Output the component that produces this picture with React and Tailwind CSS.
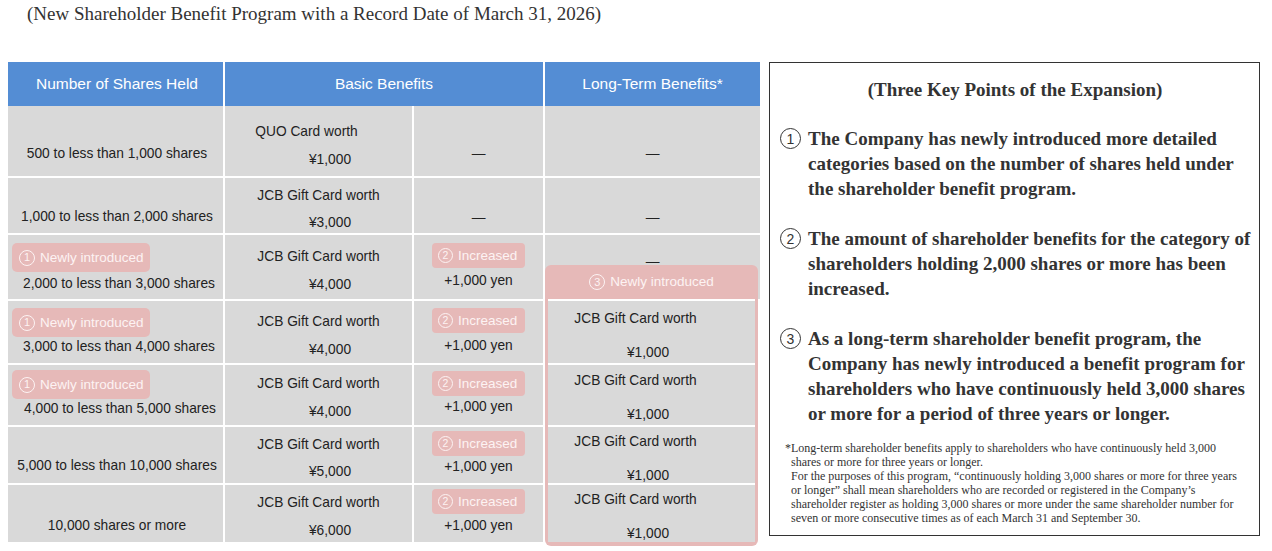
import React from "react";

const SANS = "font-['Liberation_Sans',Arial,sans-serif]";
const SERIF = "font-['Liberation_Serif','Times_New_Roman',serif]";

function Circ({ n, cls }) {
  return (
    <span className={"shrink-0 rounded-full flex items-center justify-center leading-none " + cls}>
      {n}
    </span>
  );
}

function BadgeNew({ cls }) {
  return (
    <div className={"ml-[4px] w-[138px] h-[29px] rounded-[5px] bg-[#e6b9b8] flex items-center gap-[5px] pl-[7px] text-[13.5px] text-[#fdf3f3] " + cls}>
      <Circ n="1" cls="w-[16px] h-[16px] border border-[#fdf3f3] text-[11px]" />
      <span>Newly introduced</span>
    </div>
  );
}

function BadgeInc({ cls }) {
  return (
    <div className={"mx-auto w-[93px] h-[25px] rounded-[4px] bg-[#e6b9b8] flex items-center gap-[5px] pl-[6px] text-[13.5px] text-[#fdf3f3] " + cls}>
      <Circ n="2" cls="w-[15px] h-[15px] border border-[#fdf3f3] text-[10.5px]" />
      <span>Increased</span>
    </div>
  );
}

const cell = "bg-[#d9d9d9] text-center leading-[20px]";

export default function App() {
  return (
    <div className={"w-[1272px] h-[551px] bg-white overflow-hidden text-[#222] " + SANS}>
      <div className={"pl-[27px] h-[28px] leading-[28px] text-[19px] text-[#333] " + SERIF}>
        (New Shareholder Benefit Program with a Record Date of March 31, 2026)
      </div>

      <div className="mt-[34px] flex items-start">
        {/* Table */}
        <div className="ml-[8px] w-[752px] text-[13.75px]">
          <div className="grid grid-cols-[215px_318px_215px] gap-x-[2px] h-[44px] text-white text-[15.5px]">
            <div className="bg-[#548dd4] flex items-center justify-center pl-[3px]">Number of Shares Held</div>
            <div className="bg-[#548dd4] flex items-center justify-center">Basic Benefits</div>
            <div className="bg-[#548dd4] flex items-center justify-center">Long-Term Benefits*</div>
          </div>

          <div className="grid grid-cols-[215px_187px_129px_215px] grid-rows-[70px_55px_64px_62px_60px_56px_57px] gap-[2px]">
            {/* Row 1 */}
            <div className={cell + " pt-[38px] pl-[3px]"}>500 to less than 1,000 shares</div>
            <div className={cell + " pt-[16px]"}>
              <div className="pr-[24px]">QUO Card worth</div>
              <div className="mt-[7.5px] pl-[23px]">¥1,000</div>
            </div>
            <div className={cell + " pt-[38px]"}>—</div>
            <div className={cell + " pt-[38px]"}>—</div>

            {/* Row 2 */}
            <div className={cell + " pt-[29px] pl-[3px]"}>1,000 to less than 2,000 shares</div>
            <div className={cell + " pt-[8px]"}>
              <div>JCB Gift Card worth</div>
              <div className="mt-[7px] pl-[23px]">¥3,000</div>
            </div>
            <div className={cell + " pt-[30px]"}>—</div>
            <div className={cell + " pt-[30px]"}>—</div>

            {/* Row 3 */}
            <div className={cell + " pt-[8px]"}>
              <BadgeNew cls="" />
              <div className="mt-[2px] pl-[7px]">2,000 to less than 3,000 shares</div>
            </div>
            <div className={cell + " pt-[12px]"}>
              <div>JCB Gift Card worth</div>
              <div className="mt-[8px] pl-[23px]">¥4,000</div>
            </div>
            <div className={cell + " pt-[8px]"}>
              <BadgeInc cls="" />
              <div className="mt-[2.5px]">+1,000 yen</div>
            </div>
            <div className={cell + " pt-[17px]"}>—</div>

            {/* Long-term overlay box (rows 4-7, column 4) */}
            <div className="col-start-4 row-start-4 row-span-4 relative z-10 -mt-[36px] -mb-[4px] mr-[2px] rounded-[6px] bg-[#e6b9b8] px-[3px] pb-[4px] flex flex-col">
              <div className="h-[34px] shrink-0 flex items-center justify-center gap-[5px] text-[13.5px] text-[#fdf3f3]">
                <Circ n="3" cls="w-[16px] h-[16px] border border-[#fdf3f3] text-[11px]" />
                <span>Newly introduced</span>
              </div>
              <div className="bg-white pt-[2px] flex flex-col gap-[2px] flex-1">
                <div className={cell + " h-[62px] pt-[8px]"}>
                  <div className="pr-[32px]">JCB Gift Card worth</div>
                  <div className="mt-[14px] pr-[7px]">¥1,000</div>
                </div>
                <div className={cell + " h-[60px] pt-[6px]"}>
                  <div className="pr-[32px]">JCB Gift Card worth</div>
                  <div className="mt-[14px] pr-[7px]">¥1,000</div>
                </div>
                <div className={cell + " h-[56px] pt-[5px]"}>
                  <div className="pr-[32px]">JCB Gift Card worth</div>
                  <div className="mt-[14px] pr-[7px]">¥1,000</div>
                </div>
                <div className={cell + " h-[57px] pt-[5px]"}>
                  <div className="pr-[32px]">JCB Gift Card worth</div>
                  <div className="mt-[14px] pr-[7px]">¥1,000</div>
                </div>
              </div>
            </div>

            {/* Row 4 */}
            <div className={cell + " pt-[7px]"}>
              <BadgeNew cls="" />
              <div className="pl-[7px]">3,000 to less than 4,000 shares</div>
            </div>
            <div className={cell + " pt-[11px]"}>
              <div>JCB Gift Card worth</div>
              <div className="mt-[8px] pl-[23px]">¥4,000</div>
            </div>
            <div className={cell + " pt-[7px]"}>
              <BadgeInc cls="" />
              <div className="mt-[3px]">+1,000 yen</div>
            </div>

            {/* Row 5 */}
            <div className={cell + " pt-[5px]"}>
              <BadgeNew cls="" />
              <div className="pl-[9px]">4,000 to less than 5,000 shares</div>
            </div>
            <div className={cell + " pt-[9px]"}>
              <div>JCB Gift Card worth</div>
              <div className="mt-[8px] pl-[23px]">¥4,000</div>
            </div>
            <div className={cell + " pt-[6px]"}>
              <BadgeInc cls="" />
              <div className="mt-[1px]">+1,000 yen</div>
            </div>

            {/* Row 6 */}
            <div className={cell + " pt-[29px] pl-[3px]"}>5,000 to less than 10,000 shares</div>
            <div className={cell + " pt-[8px]"}>
              <div>JCB Gift Card worth</div>
              <div className="mt-[7px] pl-[23px]">¥5,000</div>
            </div>
            <div className={cell + " pt-[4px]"}>
              <BadgeInc cls="" />
              <div className="mt-[1px]">+1,000 yen</div>
            </div>

            {/* Row 7 */}
            <div className={cell + " pt-[31px] pl-[3px]"}>10,000 shares or more</div>
            <div className={cell + " pt-[8px]"}>
              <div>JCB Gift Card worth</div>
              <div className="mt-[7.5px] pl-[23px]">¥6,000</div>
            </div>
            <div className={cell + " pt-[4px]"}>
              <BadgeInc cls="" />
              <div className="mt-[2px]">+1,000 yen</div>
            </div>
          </div>
        </div>

        {/* Right panel */}
        <div className={"ml-[9px] w-[491px] h-[474px] border border-[#333] pl-[10px] pr-[4px] pt-[14px] text-[#333] " + SERIF}>
          <div className="text-center font-bold text-[19px] leading-[25px] pr-[5px]">
            (Three Key Points of the Expansion)
          </div>

          <div className="mt-[24px] flex">
            <div className="w-[28px] h-[25px] shrink-0 flex items-center">
              <Circ n="1" cls={"w-[21px] h-[21px] border-[1.5px] border-[#333] text-[14px] " + SANS} />
            </div>
            <div className="font-bold text-[19px] leading-[25px] whitespace-nowrap">
              The Company has newly introduced more detailed<br />
              categories based on the number of shares held under<br />
              the shareholder benefit program.
            </div>
          </div>

          <div className="mt-[25px] flex">
            <div className="w-[28px] h-[25px] shrink-0 flex items-center">
              <Circ n="2" cls={"w-[21px] h-[21px] border-[1.5px] border-[#333] text-[14px] " + SANS} />
            </div>
            <div className="font-bold text-[19px] leading-[25px] whitespace-nowrap">
              The amount of shareholder benefits for the category of<br />
              shareholders holding 2,000 shares or more has been<br />
              increased.
            </div>
          </div>

          <div className="mt-[25px] flex">
            <div className="w-[28px] h-[25px] shrink-0 flex items-center">
              <Circ n="3" cls={"w-[21px] h-[21px] border-[1.5px] border-[#333] text-[14px] " + SANS} />
            </div>
            <div className="font-bold text-[19px] leading-[25px] whitespace-nowrap">
              As a long-term shareholder benefit program, the<br />
              Company has newly introduced a benefit program for<br />
              shareholders who have continuously held 3,000 shares<br />
              or more for a period of three years or longer.
            </div>
          </div>

          <div className="mt-[15px] pl-[11px] text-[12px] leading-[14px] whitespace-nowrap">
            <div className="[text-indent:-6px]">
              *Long-term shareholder benefits apply to shareholders who have continuously held 3,000<br />
              shares or more for three years or longer.
            </div>
            <div>
              For the purposes of this program, “continuously holding 3,000 shares or more for three years<br />
              or longer” shall mean shareholders who are recorded or registered in the Company’s<br />
              shareholder register as holding 3,000 shares or more under the same shareholder number for<br />
              seven or more consecutive times as of each March 31 and September 30.
            </div>
          </div>
        </div>
      </div>
    </div>
  );
}
